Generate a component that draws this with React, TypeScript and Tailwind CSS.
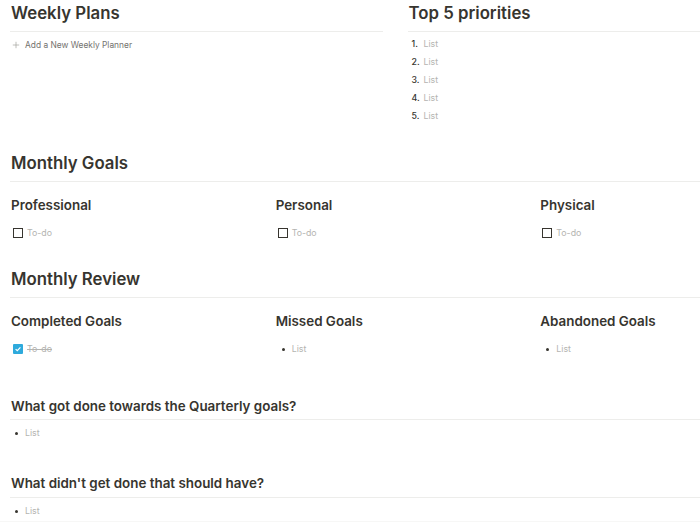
import React from 'react';

function SectionTitle({ children, className = '' }: { children: React.ReactNode; className?: string }) {
  return (
    <div className={`h-[32px] border-b border-[#ededeb] pt-[1px] ${className}`}>
      <div className="pl-px text-[16.8px] font-semibold leading-[24px]">{children}</div>
    </div>
  );
}

function Todo({ done = false }: { done?: boolean }) {
  return (
    <div className="flex h-[20px] items-center pl-[3px]">
      {done ? (
        <span className="flex h-[10px] w-[10px] items-center justify-center rounded-[1px] bg-[#2eaadc]">
          <svg viewBox="0 0 10 10" className="h-[8px] w-[8px]">
            <path d="M2 5.2 4.1 7.2 8 2.9" fill="none" stroke="white" strokeWidth="1.5" />
          </svg>
        </span>
      ) : (
        <span className="h-[10px] w-[10px] border-[1.5px] border-[#37352f]" />
      )}
      <span className={`ml-[4px] text-[8.8px] text-[#b4b4b1] ${done ? 'line-through' : ''}`}>To-do</span>
    </div>
  );
}

function Bullet({ indent = 'pl-[7px]' }: { indent?: string }) {
  return (
    <div className={`flex h-[20px] items-center ${indent}`}>
      <span className="h-[3px] w-[3px] rounded-full bg-[#37352f]" />
      <span className="ml-[7px] text-[8.8px] text-[#b4b4b1]">List</span>
    </div>
  );
}

function Column({ title, children }: { title: string; children: React.ReactNode }) {
  return (
    <div>
      <div className="mt-[13px] h-[20px] pl-px text-[13.4px] font-semibold leading-[20px]">{title}</div>
      <div className="mt-[8px]">{children}</div>
    </div>
  );
}

export default function App() {
  return (
    <div className="relative flex h-[522px] w-[700px] flex-col overflow-hidden bg-white font-['Inter',sans-serif] text-[#37352f]">
      <div className="ml-[10px] w-[770px] flex-1">
        {/* weekly plans + priorities */}
        <div className="grid grid-cols-2 gap-x-[25px]">
          <div>
            <SectionTitle>Weekly Plans</SectionTitle>
            <div className="mt-[6px] flex h-[14px] items-center pl-[2px]">
              <svg viewBox="0 0 10 10" className="h-[8px] w-[8px]">
                <path d="M5 1v8M1 5h8" stroke="#a5a4a0" strokeWidth="0.9" />
              </svg>
              <span className="ml-[5px] text-[8.4px] text-[#73726e]">Add a New Weekly Planner</span>
            </div>
          </div>
          <div>
            <SectionTitle>Top 5 priorities</SectionTitle>
            <div className="pt-[3px]">
              {[1, 2, 3, 4, 5].map((n) => (
                <div key={n} className="flex h-[18px] items-center pl-[4px] text-[8.8px]">
                  <span className="w-[12px] font-medium">{n}.</span>
                  <span className="text-[#b4b4b1]">List</span>
                </div>
              ))}
            </div>
          </div>
        </div>

        <SectionTitle className="mt-[25px]">Monthly Goals</SectionTitle>
        <div className="grid grid-cols-3 gap-x-[24px]">
          <Column title="Professional"><Todo /></Column>
          <Column title="Personal"><Todo /></Column>
          <Column title="Physical"><Todo /></Column>
        </div>

        <SectionTitle className="mt-[23px]">Monthly Review</SectionTitle>
        <div className="grid grid-cols-3 gap-x-[24px]">
          <Column title="Completed Goals"><Todo done /></Column>
          <Column title="Missed Goals"><Bullet /></Column>
          <Column title="Abandoned Goals"><Bullet /></Column>
        </div>

        <div className="mt-[37px] border-b border-[#ededeb] pb-[3px] pl-px text-[13.4px] font-semibold leading-[20px]">
          What got done towards the Quarterly goals?
        </div>
        <div className="mt-[3px]"><Bullet indent="pl-[5px]" /></div>

        <div className="mt-[30px] border-b border-[#ededeb] pb-[4px] pl-px text-[13.4px] font-semibold leading-[20px]">
          What didn't get done that should have?
        </div>
        <div className="mt-[3px]"><Bullet indent="pl-[5px]" /></div>
      </div>
      <div className="h-[3px] bg-[#f7f7f6]" />
    </div>
  );
}
